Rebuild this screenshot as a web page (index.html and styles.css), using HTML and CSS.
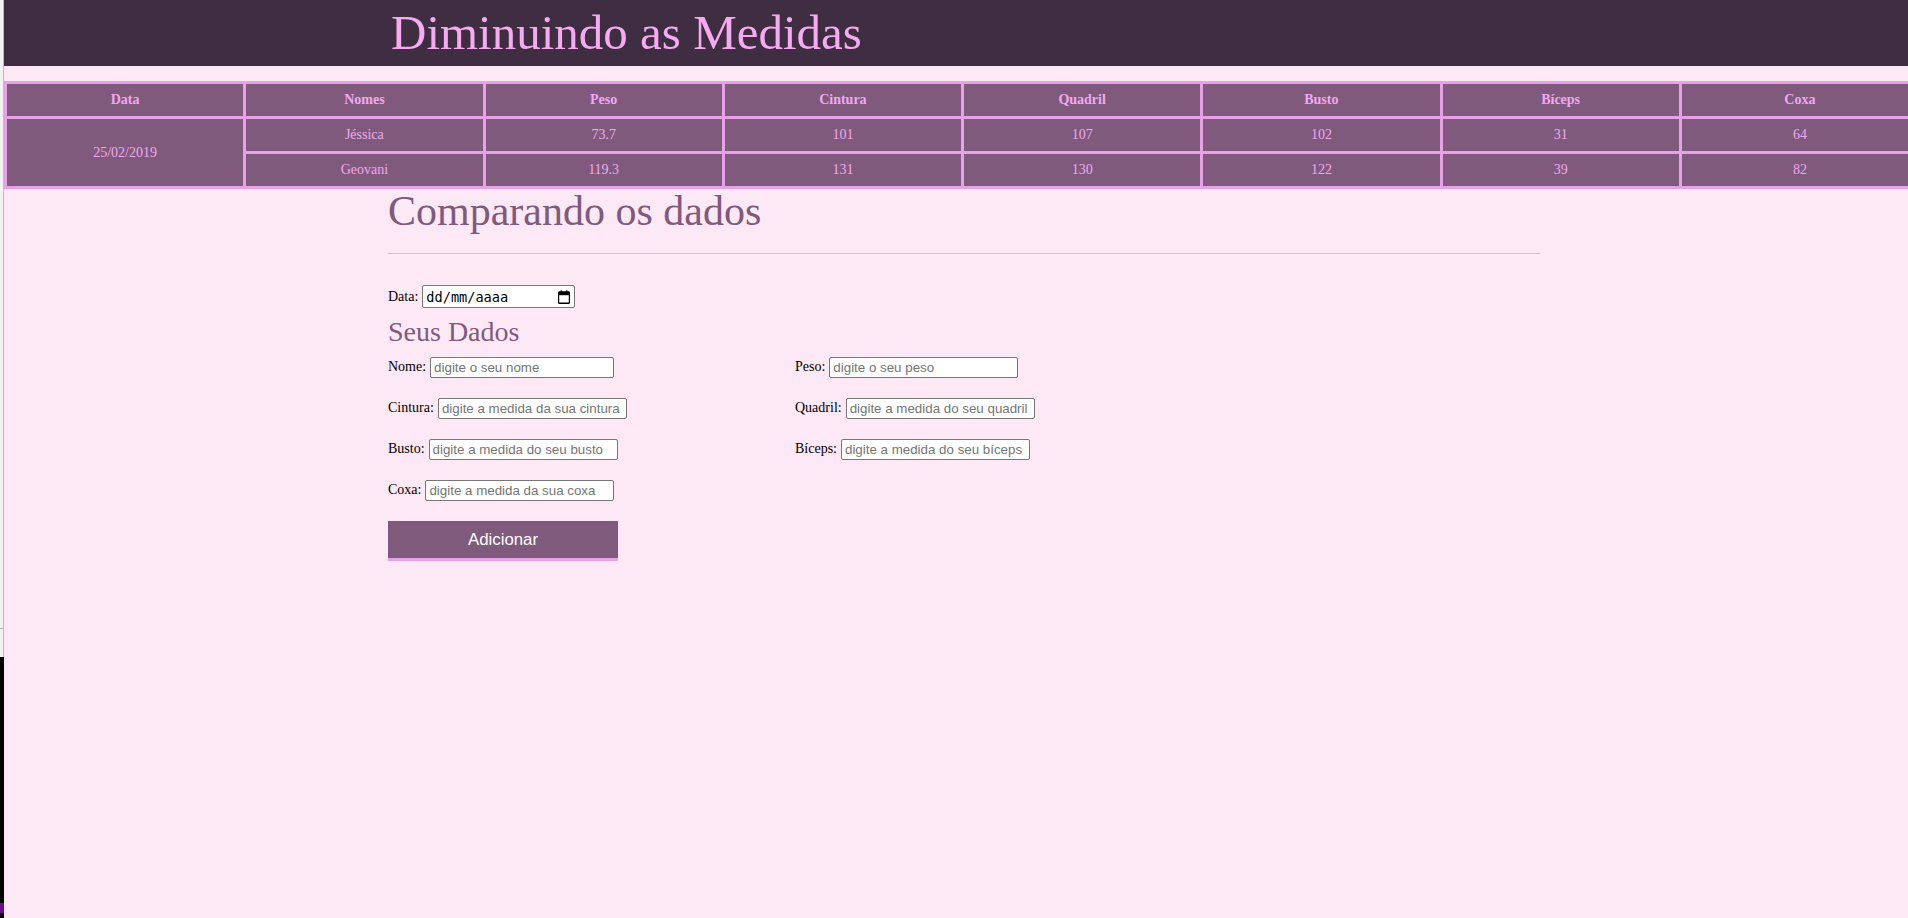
FILE: index.html
```html
<!DOCTYPE html>
<html lang="pt-BR">
<head>
<meta charset="utf-8">
<title>Diminuindo as Medidas</title>
<link rel="stylesheet" href="styles.css">
</head>
<body>
<div class="edge">
  <div class="edge-light"></div>
  <div class="edge-line"></div>
  <div class="edge-light2"></div>
  <div class="edge-dark"></div>
  <div class="edge-accent"></div>
  <div class="edge-dark2"></div>
</div>
<div class="page">
  <header class="topbar">
    <h1 class="title">Diminuindo as Medidas</h1>
  </header>
  <table class="measures">
    <thead>
      <tr><th>Data</th><th>Nomes</th><th>Peso</th><th>Cintura</th><th>Quadril</th><th>Busto</th><th>Bíceps</th><th>Coxa</th></tr>
    </thead>
    <tbody>
      <tr><td rowspan="2">25/02/2019</td><td>Jéssica</td><td>73.7</td><td>101</td><td>107</td><td>102</td><td>31</td><td>64</td></tr>
      <tr><td>Geovani</td><td>119.3</td><td>131</td><td>130</td><td>122</td><td>39</td><td>82</td></tr>
    </tbody>
  </table>
  <main class="content">
    <h2 class="section-title">Comparando os dados</h2>
    <hr class="divider">
    <div class="field date-field">
      <label for="data">Data:</label>
      <div class="date-box">
        <input id="data" class="date-text" type="text" placeholder="dd/mm/aaaa">
        <svg class="cal-icon" width="12" height="14" viewBox="0 0 12 14" aria-hidden="true">
          <rect x="2.5" y="0.5" width="1.5" height="2.5" fill="#000"/>
          <rect x="8" y="0.5" width="1.5" height="2.5" fill="#000"/>
          <rect x="0.5" y="2" width="11" height="11.3" rx="1" fill="none" stroke="#000" stroke-width="1.4"/>
          <rect x="0.5" y="2" width="11" height="3.2" fill="#000"/>
        </svg>
      </div>
    </div>
    <h3 class="sub-title">Seus Dados</h3>
    <form class="form-grid">
      <div class="field"><label for="nome">Nome:</label><input id="nome" class="txt txt-name" type="text" placeholder="digite o seu nome"></div>
      <div class="field"><label for="peso">Peso:</label><input id="peso" class="txt" type="text" placeholder="digite o seu peso"></div>
      <div class="field"><label for="cintura">Cintura:</label><input id="cintura" class="txt" type="text" placeholder="digite a medida da sua cintura"></div>
      <div class="field"><label for="quadril">Quadril:</label><input id="quadril" class="txt" type="text" placeholder="digite a medida do seu quadril"></div>
      <div class="field"><label for="busto">Busto:</label><input id="busto" class="txt" type="text" placeholder="digite a medida do seu busto"></div>
      <div class="field"><label for="biceps">Bíceps:</label><input id="biceps" class="txt" type="text" placeholder="digite a medida do seu bíceps"></div>
      <div class="field"><label for="coxa">Coxa:</label><input id="coxa" class="txt" type="text" placeholder="digite a medida da sua coxa"></div>
    </form>
    <button class="add-btn" type="button">Adicionar</button>
  </main>
</div>
</body>
</html>
```
FILE: styles.css
```css
html, body {
  margin: 0;
  padding: 0;
}
body {
  display: flex;
  height: 918px;
  overflow: hidden;
  background: #fde8f5;
  font-family: "Liberation Serif", "Times New Roman", serif;
  font-size: 14px;
  color: #000;
}
.edge {
  width: 4px;
  flex: 0 0 4px;
  display: flex;
  flex-direction: column;
}
.edge-light {
  height: 628px;
  background: #f3f3f3;
  border-right: 1px solid #bdbdbd;
}
.edge-line {
  height: 1px;
  background: #b8b8b8;
}
.edge-light2 {
  height: 28px;
  background: #f3f3f3;
  border-right: 1px solid #bdbdbd;
}
.edge-dark {
  height: 246px;
  background: #050505;
}
.edge-accent {
  height: 10px;
  background: #6a0d8a;
}
.edge-dark2 {
  flex: 1;
  background: #050505;
}
.page {
  flex: 1;
  min-width: 0;
  overflow: hidden;
}
.topbar {
  height: 66px;
  background: #3f2d41;
  padding-left: 387px;
  box-sizing: border-box;
}
.title {
  margin: 0;
  padding-top: 4px;
  font-size: 49px;
  font-weight: normal;
  color: #f5aaf1;
  line-height: normal;
}
.measures {
  margin-top: 15px;
  border-collapse: collapse;
  table-layout: fixed;
  width: 1917px;
  font-size: 14px;
}
.measures th,
.measures td {
  border: 3px solid #e7a1e7;
  background: #7f5a7d;
  color: #f2a8ef;
  text-align: center;
  vertical-align: middle;
  padding: 0;
  height: 32px;
  line-height: 32px;
}
.measures th {
  font-weight: bold;
}
.content {
  padding-left: 384px;
  width: 1152px;
}
.section-title {
  margin: 0;
  font-size: 42px;
  font-weight: normal;
  color: #7f5a7d;
  line-height: 44px;
}
.divider {
  margin: 20px 0 0;
  border: 0;
  border-top: 1px solid #cbc4ca;
  height: 0;
}
.field {
  display: flex;
  align-items: center;
  gap: 4px;
  height: 20px;
}
.field label {
  white-space: nowrap;
}
.date-field {
  margin-top: 31px;
  height: 23px;
}
.date-box {
  box-sizing: border-box;
  width: 153px;
  height: 23px;
  display: flex;
  align-items: center;
  padding: 0 4px 0 3px;
  border: 1px solid #767676;
  border-radius: 2px;
  background: #fff;
}
.date-text {
  flex: 1;
  min-width: 0;
  margin: 0;
  padding: 0;
  border: 0;
  outline: none;
  background: transparent;
  font-family: "DejaVu Sans Mono", "Liberation Mono", monospace;
  font-size: 13.6px;
  color: #000;
}
.date-text::placeholder {
  color: #000;
  opacity: 1;
}
.cal-icon {
  flex: 0 0 12px;
  display: block;
}
.sub-title {
  margin: 8px 0 0;
  font-size: 28px;
  font-weight: normal;
  color: #7f5a7d;
  line-height: normal;
}
.form-grid {
  margin: 9px 0 0;
  display: grid;
  grid-template-columns: 407px auto;
  grid-auto-rows: 20px;
  row-gap: 21px;
}
.txt {
  box-sizing: border-box;
  width: 189px;
  height: 21px;
  margin: 0;
  padding: 1px 3px;
  border: 1px solid #767676;
  border-radius: 2px;
  background: #fff;
  font-family: "Liberation Sans", Arial, sans-serif;
  font-size: 13.33px;
  color: #000;
}
.txt-name {
  width: 184px;
}
.txt::placeholder {
  color: #757575;
}
.add-btn {
  display: block;
  margin-top: 21px;
  width: 230px;
  height: 40px;
  padding: 0;
  border: 0;
  border-bottom: 3px solid #e7a1e7;
  background: #7f5a7d;
  color: #fff;
  font-family: "Liberation Sans", Arial, sans-serif;
  font-size: 16.8px;
  cursor: pointer;
}
```
